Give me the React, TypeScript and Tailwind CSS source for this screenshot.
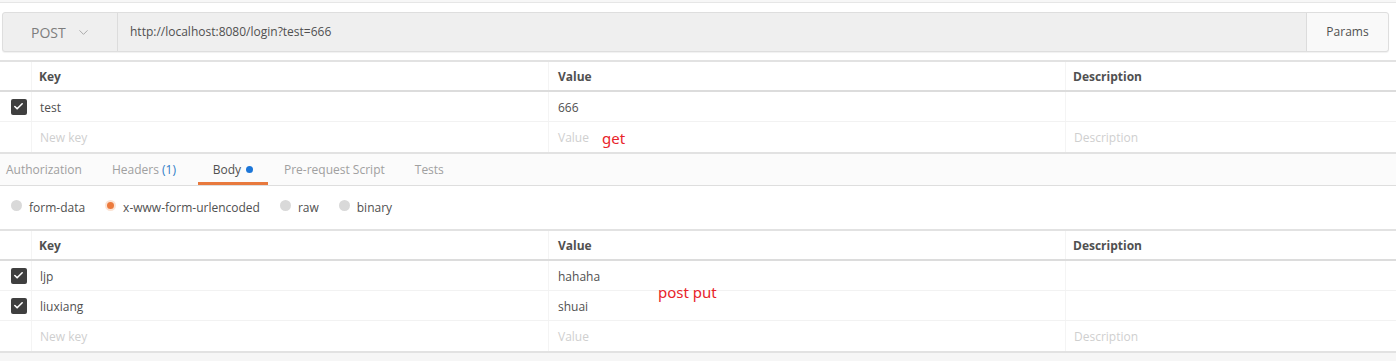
import { Check, ChevronDown } from "lucide-react";

type Row = { key: string; value: string };

const cols = "grid h-[30px] grid-cols-[32px_516px_517px_1fr] items-stretch";

function Checkbox() {
  return (
    <div className="flex h-[16px] w-[16px] items-center justify-center rounded-[2px] bg-[#3f3f3f]">
      <Check className="h-[11px] w-[11px] text-white" strokeWidth={3.5} />
    </div>
  );
}

function KvTable({ rows }: { rows: Row[] }) {
  return (
    <div className="w-full border-t-2 border-b-2 border-[#e2e2e2] bg-white text-[12px]">
      <div className={`${cols} border-b-2 border-[#dcdcdc] font-bold text-[#505050]`}>
        <div className="border-r border-[#f4f4f4]" />
        <div className="flex items-center pl-[7px] pt-[2px]">Key</div>
        <div className="flex items-center border-l border-[#f4f4f4] pl-[9px] pt-[2px]">Value</div>
        <div className="flex items-center border-l border-[#f4f4f4] pl-[7px] pt-[2px]">Description</div>
      </div>
      {rows.map((r) => (
        <div key={r.key} className={`${cols} border-b border-[#f2f2f2] text-[#505050]`}>
          <div className="flex items-center justify-center border-r border-[#f4f4f4] pl-[6px]">
            <Checkbox />
          </div>
          <div className="flex items-center pl-[8px] pt-[2px]">{r.key}</div>
          <div className="flex items-center border-l border-[#f4f4f4] pl-[9px] pt-[2px]">{r.value}</div>
          <div className="border-l border-[#f4f4f4]" />
        </div>
      ))}
      <div className={`${cols} text-[#cfcfcf]`}>
        <div className="border-r border-[#f4f4f4]" />
        <div className="flex items-center pl-[8px] pt-[2px]">New key</div>
        <div className="flex items-center border-l border-[#f4f4f4] pl-[9px] pt-[2px]">Value</div>
        <div className="flex items-center border-l border-[#f4f4f4] pl-[8px] pt-[2px]">Description</div>
      </div>
    </div>
  );
}

function Radio({ on, label }: { on?: boolean; label: string }) {
  return (
    <div className="flex items-center gap-[7px]">
      <span
        className={
          on
            ? "mb-[6px] h-[11px] w-[11px] rounded-full border-2 border-[#fbe3d4] bg-[#ec7a3c]"
            : "mb-[6px] h-[11px] w-[11px] rounded-full bg-[#d9d9d9]"
        }
      />
      <span>{label}</span>
    </div>
  );
}

export default function App() {
  return (
    <div className="relative h-[361px] w-[1396px] overflow-hidden bg-white font-['Open_Sans',sans-serif]">
      <div className="h-[3px] border-b border-[#e6e6e6] bg-[#f7f7f7]" />

      <div className="pl-[2px] pr-[7px] pt-[9px]">
        <div className="flex h-[40px] rounded-[3px] border border-[#dedede] bg-[#efefef] shadow-[0_1px_1px_rgba(0,0,0,0.06)]">
          <div className="flex w-[115px] items-center border-r border-[#dcdcdc] pl-[28px] text-[14px] text-[#7d7d7d]">
            POST
            <ChevronDown className="ml-[10px] h-[15px] w-[15px] text-[#a5a5a5]" strokeWidth={1.5} />
          </div>
          <div className="flex flex-1 items-center pl-[12px] text-[12px] text-[#505050]">
            http://localhost:8080/login?test=666
          </div>
          <div className="flex w-[82px] items-center justify-center rounded-r-[3px] border-l border-[#dcdcdc] bg-[#f9f9f9] text-[12px] text-[#505050]">
            Params
          </div>
        </div>
      </div>

      <div className="mt-[8px]">
        <KvTable rows={[{ key: "test", value: "666" }]} />
      </div>

      <div className="flex h-[32px] items-center border-b border-[#dedede] bg-[#fbfbfb] text-[12px] text-[#a0a0a0]">
        <div className="pl-[6px]">Authorization</div>
        <div className="pl-[30px]">
          Headers <span className="text-[#2f7bc6]">(1)</span>
        </div>
        <div className="ml-[22px] flex h-full w-[70px] items-center justify-center border-b-[3px] border-[#e8793d] pt-[3px] text-[#505050]">
          Body
          <span className="ml-[5px] h-[7px] w-[7px] rounded-full bg-[#1c76d8]" />
        </div>
        <div className="pl-[16px]">Pre-request Script</div>
        <div className="pl-[30px]">Tests</div>
      </div>

      <div className="flex h-[43px] items-center gap-[20px] pl-[11px] pt-[1px] text-[12px] text-[#505050]">
        <Radio label="form-data" />
        <Radio on label="x-www-form-urlencoded" />
        <Radio label="raw" />
        <Radio label="binary" />
      </div>

      <KvTable
        rows={[
          { key: "ljp", value: "hahaha" },
          { key: "liuxiang", value: "shuai" },
        ]}
      />
      <div className="h-[20px] bg-[#f6f6f6]" />

      <span className="absolute left-[602px] top-[127px] font-['Noto_Sans',sans-serif] text-[15px] text-[#e8232a]">
        get
      </span>
      <span className="absolute left-[658px] top-[281px] font-['Noto_Sans',sans-serif] text-[15px] text-[#e8232a]">
        post put
      </span>
    </div>
  );
}
